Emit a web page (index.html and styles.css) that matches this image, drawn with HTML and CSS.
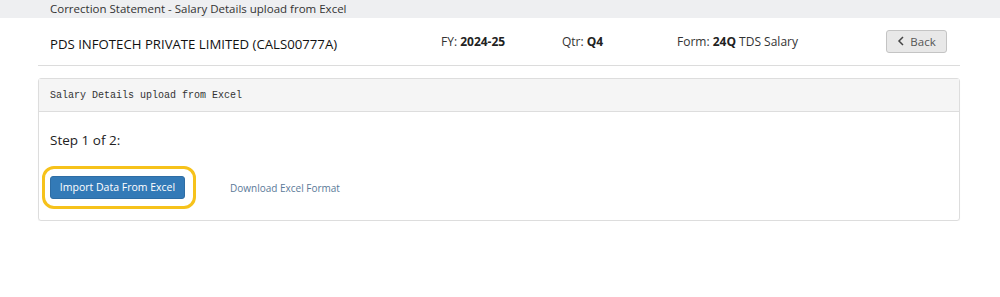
FILE: index.html
```html
<!DOCTYPE html>
<html>
<head>
<meta charset="utf-8">
<link rel="stylesheet" href="styles.css">
</head>
<body>
<div class="topbar">Correction Statement - Salary Details upload from Excel</div>
<div class="container">
  <div class="info-row">
    <div class="company">PDS INFOTECH PRIVATE LIMITED (CALS00777A)</div>
    <div class="fy">FY: <b>2024-25</b></div>
    <div class="qtr">Qtr: <b>Q4</b></div>
    <div class="form">Form: <b>24Q</b> TDS Salary</div>
    <button class="back-btn"><svg class="chev" width="8" height="10" viewBox="0 0 8 10"><path d="M6 1 L2 5 L6 9" fill="none" stroke="#444" stroke-width="1.5"/></svg>Back</button>
  </div>
  <div class="panel">
    <div class="panel-heading">Salary Details upload from Excel</div>
    <div class="panel-body">
      <div class="step">Step 1 of 2:</div>
      <div class="actions">
        <div class="highlight">
          <button class="btn-primary">Import Data From Excel</button>
        </div>
        <a class="link" href="#">Download Excel Format</a>
      </div>
    </div>
  </div>
</div>
</body>
</html>
```
FILE: styles.css
```css
* { box-sizing: border-box; }
body {
  margin: 0;
  background: #fff;
  font-family: "Open Sans", "Noto Sans", sans-serif;
  color: #333;
}
.topbar {
  height: 18px;
  background: #eeeff1;
  padding-left: 50px;
  font-size: 11.5px;
  line-height: 18px;
  color: #333;
}
.container {
  margin: 0 40px 0 38px;
}
.info-row {
  display: flex;
  align-items: center;
  height: 48px;
  padding: 0 12px;
  border-bottom: 1px solid #dcdcdc;
  font-size: 12px;
}
.company {
  width: 391px;
  font-size: 13.2px;
  color: #111;
  padding-top: 5px;
}
.fy { width: 121px; }
.qtr { width: 115px; }
.form { flex: 1; }
.info-row b { font-weight: 700; color: #222; }
.back-btn {
  width: 61px;
  height: 23px;
  margin-right: 1px;
  background: #e8e8e8;
  border: 1px solid #c4c4c4;
  border-radius: 3px;
  font-family: inherit;
  font-size: 11.5px;
  color: #555;
  display: flex;
  align-items: center;
  justify-content: center;
  gap: 5px;
  padding: 0 0 1px 0;
}
.chev { display: block; }
.panel {
  margin-top: 12px;
  border: 1px solid #dddddd;
  border-radius: 3px;
  height: 143px;
  box-shadow: 0 1px 1px rgba(0,0,0,0.05);
}
.panel-heading {
  height: 33px;
  background: #f5f5f5;
  border-bottom: 1px solid #dddddd;
  padding-left: 11px;
  font-family: "Liberation Mono", "DejaVu Sans Mono", monospace;
  font-size: 10px;
  line-height: 33px;
  color: #333;
}
.panel-body {
  padding: 18px 11px 0 11px;
}
.step {
  font-size: 13.5px;
  line-height: 20px;
  color: #222;
}
.actions {
  display: flex;
  align-items: center;
  margin-top: 16px;
}
.highlight {
  margin-left: -8px;
  padding: 7px 8px 8px 8px;
  border: 3px solid #f6c21b;
  border-radius: 12px;
  width: 154px;
  height: 43px;
  display: flex;
  align-items: center;
}
.btn-primary {
  margin-left: -3px;
  width: 135px;
  height: 23px;
  background: #337ab7;
  border: 1px solid #2e6da4;
  border-radius: 3px;
  color: #fff;
  font-family: inherit;
  font-size: 10.5px;
  padding: 0;
}
.link {
  margin-left: 34px;
  font-size: 10px;
  color: #5b7a99;
  text-decoration: none;
}
```
